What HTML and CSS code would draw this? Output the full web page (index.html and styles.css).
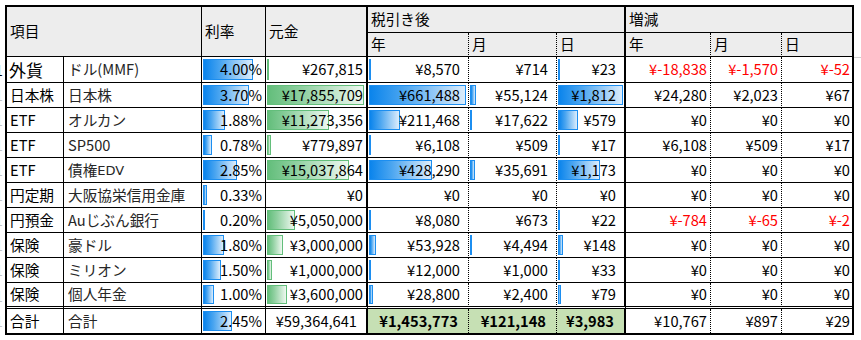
FILE: index.html
```html
<!DOCTYPE html>
<html lang="ja">
<head>
<meta charset="utf-8">
<link rel="stylesheet" href="styles.css">
</head>
<body>
<div class="page">
  <div class="gutter">
    <div class="g g-first"><span>1</span></div>
    <div class="g"><span>1</span></div>
    <div class="g"><span>1</span></div>
    <div class="g"><span>1</span></div>
    <div class="g"><span>1</span></div>
    <div class="g"><span>1</span></div>
    <div class="g"><span>1</span></div>
    <div class="g"><span>1</span></div>
    <div class="g"><span>1</span></div>
    <div class="g g-last"><span>1</span></div>
    <div class="g"><span>1</span></div>
  </div>
  <div class="sheet">
    <div class="c h h-item">項目</div>
    <div class="c h h-rate">利率</div>
    <div class="c h h-prin b2">元金</div>
    <div class="c h h-tax b2">税引き後</div>
    <div class="c h h-diff last">増減</div>
    <div class="c h dot">年</div>
    <div class="c h dot">月</div>
    <div class="c h b2">日</div>
    <div class="c h dot">年</div>
    <div class="c h dot">月</div>
    <div class="c h last">日</div>

    <!-- row 1 -->
    <div class="c t kind big">外貨</div>
    <div class="c t name">ドル(MMF)</div>
    <div class="c n"><i class="bar" style="width:50px"></i><span>4.00%</span></div>
    <div class="c n b2"><i class="bar green" style="width:2px"></i><span>¥267,815</span></div>
    <div class="c n dot tx"><i class="bar" style="width:1px"></i><span>¥8,570</span></div>
    <div class="c n dot tx"><span>¥714</span></div>
    <div class="c n b2 tx"><i class="bar" style="width:1px"></i><span>¥23</span></div>
    <div class="c n dot red"><span>¥-18,838</span></div>
    <div class="c n dot red"><span>¥-1,570</span></div>
    <div class="c n last red"><span>¥-52</span></div>

    <!-- row 2 -->
    <div class="c t kind">日本株</div>
    <div class="c t name">日本株</div>
    <div class="c n"><i class="bar" style="width:46px"></i><span>3.70%</span></div>
    <div class="c n b2"><i class="bar green" style="width:97px"></i><span>¥17,855,709</span></div>
    <div class="c n dot tx"><i class="bar" style="width:97px"></i><span>¥661,488</span></div>
    <div class="c n dot tx"><i class="bar" style="width:6px"></i><span>¥55,124</span></div>
    <div class="c n b2 tx"><i class="bar" style="width:65px"></i><span>¥1,812</span></div>
    <div class="c n dot"><span>¥24,280</span></div>
    <div class="c n dot"><span>¥2,023</span></div>
    <div class="c n last"><span>¥67</span></div>

    <!-- row 3 -->
    <div class="c t kind">ETF</div>
    <div class="c t name">オルカン</div>
    <div class="c n"><i class="bar" style="width:22px"></i><span>1.88%</span></div>
    <div class="c n b2"><i class="bar green" style="width:62px"></i><span>¥11,273,356</span></div>
    <div class="c n dot tx"><i class="bar" style="width:31px"></i><span>¥211,468</span></div>
    <div class="c n dot tx"><i class="bar" style="width:2px"></i><span>¥17,622</span></div>
    <div class="c n b2 tx"><i class="bar" style="width:20px"></i><span>¥579</span></div>
    <div class="c n dot"><span>¥0</span></div>
    <div class="c n dot"><span>¥0</span></div>
    <div class="c n last"><span>¥0</span></div>

    <!-- row 4 -->
    <div class="c t kind">ETF</div>
    <div class="c t name">SP500</div>
    <div class="c n"><i class="bar" style="width:9px"></i><span>0.78%</span></div>
    <div class="c n b2"><i class="bar green" style="width:4px"></i><span>¥779,897</span></div>
    <div class="c n dot tx"><i class="bar" style="width:1px"></i><span>¥6,108</span></div>
    <div class="c n dot tx"><span>¥509</span></div>
    <div class="c n b2 tx"><i class="bar" style="width:1px"></i><span>¥17</span></div>
    <div class="c n dot"><span>¥6,108</span></div>
    <div class="c n dot"><span>¥509</span></div>
    <div class="c n last"><span>¥17</span></div>

    <!-- row 5 -->
    <div class="c t kind">ETF</div>
    <div class="c t name">債権<span class="latin">EDV</span></div>
    <div class="c n"><i class="bar" style="width:34px"></i><span>2.85%</span></div>
    <div class="c n b2"><i class="bar green" style="width:82px"></i><span>¥15,037,864</span></div>
    <div class="c n dot tx"><i class="bar" style="width:63px"></i><span>¥428,290</span></div>
    <div class="c n dot tx"><i class="bar" style="width:5px"></i><span>¥35,691</span></div>
    <div class="c n b2 tx"><i class="bar" style="width:42px"></i><span>¥1,173</span></div>
    <div class="c n dot"><span>¥0</span></div>
    <div class="c n dot"><span>¥0</span></div>
    <div class="c n last"><span>¥0</span></div>

    <!-- row 6 -->
    <div class="c t kind">円定期</div>
    <div class="c t name">大阪協栄信用金庫</div>
    <div class="c n"><i class="bar" style="width:4px"></i><span>0.33%</span></div>
    <div class="c n b2"><span>¥0</span></div>
    <div class="c n dot tx"><span>¥0</span></div>
    <div class="c n dot tx"><span>¥0</span></div>
    <div class="c n b2 tx"><span>¥0</span></div>
    <div class="c n dot"><span>¥0</span></div>
    <div class="c n dot"><span>¥0</span></div>
    <div class="c n last"><span>¥0</span></div>

    <!-- row 7 -->
    <div class="c t kind">円預金</div>
    <div class="c t name">Auじぶん銀行</div>
    <div class="c n"><i class="bar" style="width:2px"></i><span>0.20%</span></div>
    <div class="c n b2"><i class="bar green" style="width:28px"></i><span>¥5,050,000</span></div>
    <div class="c n dot tx"><i class="bar" style="width:1px"></i><span>¥8,080</span></div>
    <div class="c n dot tx"><span>¥673</span></div>
    <div class="c n b2 tx"><i class="bar" style="width:1px"></i><span>¥22</span></div>
    <div class="c n dot red"><span>¥-784</span></div>
    <div class="c n dot red"><span>¥-65</span></div>
    <div class="c n last red"><span>¥-2</span></div>

    <!-- row 8 -->
    <div class="c t kind">保険</div>
    <div class="c t name">豪ドル</div>
    <div class="c n"><i class="bar" style="width:21px"></i><span>1.80%</span></div>
    <div class="c n b2"><i class="bar green" style="width:16px"></i><span>¥3,000,000</span></div>
    <div class="c n dot tx"><i class="bar" style="width:7px"></i><span>¥53,928</span></div>
    <div class="c n dot tx"><i class="bar" style="width:1px"></i><span>¥4,494</span></div>
    <div class="c n b2 tx"><i class="bar" style="width:5px"></i><span>¥148</span></div>
    <div class="c n dot"><span>¥0</span></div>
    <div class="c n dot"><span>¥0</span></div>
    <div class="c n last"><span>¥0</span></div>

    <!-- row 9 -->
    <div class="c t kind">保険</div>
    <div class="c t name">ミリオン</div>
    <div class="c n"><i class="bar" style="width:18px"></i><span>1.50%</span></div>
    <div class="c n b2"><i class="bar green" style="width:5px"></i><span>¥1,000,000</span></div>
    <div class="c n dot tx"><i class="bar" style="width:2px"></i><span>¥12,000</span></div>
    <div class="c n dot tx"><span>¥1,000</span></div>
    <div class="c n b2 tx"><i class="bar" style="width:1px"></i><span>¥33</span></div>
    <div class="c n dot"><span>¥0</span></div>
    <div class="c n dot"><span>¥0</span></div>
    <div class="c n last"><span>¥0</span></div>

    <!-- row 10 -->
    <div class="c t kind dbl">保険</div>
    <div class="c t name dbl">個人年金</div>
    <div class="c n dbl"><i class="bar" style="width:11px"></i><span>1.00%</span></div>
    <div class="c n b2 dbl"><i class="bar green" style="width:20px"></i><span>¥3,600,000</span></div>
    <div class="c n dot tx dbl"><i class="bar" style="width:4px"></i><span>¥28,800</span></div>
    <div class="c n dot tx dbl"><span>¥2,400</span></div>
    <div class="c n b2 tx dbl"><i class="bar" style="width:3px"></i><span>¥79</span></div>
    <div class="c n dot dbl"><span>¥0</span></div>
    <div class="c n dot dbl"><span>¥0</span></div>
    <div class="c n last dbl"><span>¥0</span></div>

    <!-- total -->
    <div class="c t kind tot">合計</div>
    <div class="c t name tot">合計</div>
    <div class="c n tot"><i class="bar" style="width:29px"></i><span>2.45%</span></div>
    <div class="c n b2 tot tp"><span>¥59,364,641</span></div>
    <div class="c n dot tot tg"><span>¥1,453,773</span></div>
    <div class="c n dot tot tg"><span>¥121,148</span></div>
    <div class="c n b2 tot tg"><span>¥3,983</span></div>
    <div class="c n dot tot"><span>¥10,767</span></div>
    <div class="c n dot tot"><span>¥897</span></div>
    <div class="c n last tot"><span>¥29</span></div>
  </div>
  <div class="rgutter"><div class="gline"></div></div>
</div>
</body>
</html>
```

FILE: styles.css
```css
html, body {
  margin: 0;
  padding: 0;
  background: #ffffff;
}

body {
  font-family: "Noto Sans CJK JP", "Noto Sans", sans-serif;
  font-size: 14.67px;
  color: #000000;
}

.page {
  display: flex;
  align-items: flex-start;
  padding-top: 5px;
}

.gutter {
  width: 5px;
  overflow: hidden;
  padding-top: 52px;
  flex: none;
}

.g {
  height: 25px;
  display: flex;
  align-items: center;
  justify-content: flex-end;
  padding-right: 2px;
  color: #c4c4c4;
  line-height: 1;
}

.g-first {
  height: 26px;
  color: #000000;
}

.g-last {
  height: 26px;
}

.sheet {
  flex: none;
  display: grid;
  grid-template-columns: 57px 138px 64px 102px 101px 88px 69px 85px 71px 70px;
  grid-template-rows: 26px 24px 26px repeat(8, 25px) 26px 24px;
  border: 2px solid #000000;
}

.c {
  box-sizing: border-box;
  position: relative;
  display: flex;
  align-items: center;
  border-right: 1px solid #000000;
  border-bottom: 1px solid #000000;
  padding: 0 3px 0 3px;
  white-space: nowrap;
  overflow: hidden;
  line-height: 1;
}

.c > span {
  position: relative;
  z-index: 1;
}

.h {
  background: #ededed;
  padding-left: 3px;
}

.h-item {
  grid-column: 1 / 3;
  grid-row: 1 / 3;
}

.h-rate {
  grid-column: 3;
  grid-row: 1 / 3;
}

.h-prin {
  grid-column: 4;
  grid-row: 1 / 3;
}

.h-tax {
  grid-column: 5 / 8;
}

.h-diff {
  grid-column: 8 / 11;
}

.b2 {
  border-right-width: 2px;
}

.dot {
  border-right: 1px dotted #000000;
}

.last {
  border-right: none;
}

.dbl {
  border-bottom: 3px double #000000;
}

.tot {
  border-bottom: none;
}

.t {
  padding-left: 3px;
}

.kind.big {
  font-size: 17px;
  padding-left: 2px;
}

.name {
  color: #262626;
  padding-left: 4px;
}

.latin {
  font-family: "DejaVu Sans", sans-serif;
  font-size: 13px;
}

.n {
  justify-content: flex-end;
  padding-right: 3px;
}

.n.last {
  padding-right: 2px;
}

.tx {
  padding-right: 8px;
}

.red {
  color: #ff0000;
}

.tp {
  padding-right: 9px;
}

.tg {
  background: #c6e0b4;
  font-weight: bold;
  padding-right: 10px;
}

.bar {
  position: absolute;
  left: 1px;
  top: 2px;
  bottom: 2px;
  box-sizing: border-box;
  min-width: 1px;
  border: 1px solid #1c8ef0;
  background: linear-gradient(to right, #0a84ec 0%, #4aa5f0 35%, #dcedfc 100%);
}

.bar.green {
  border-color: #63be7b;
  background: linear-gradient(to right, #63be7b 0%, #8fd0a0 35%, #eef8f0 100%);
}

.rgutter {
  flex: 1;
  padding-top: 52px;
}

.gline {
  height: 1px;
  background: #d0d0d0;
}
```
